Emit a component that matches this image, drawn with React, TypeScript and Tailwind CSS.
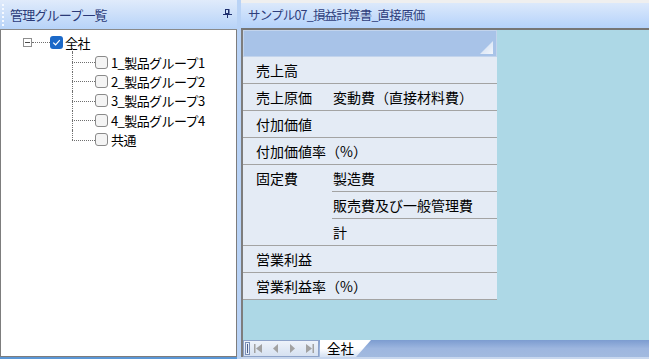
import React from "react";

const jp = "font-['Noto_Sans_CJK_JP',sans-serif]";

function Check({ checked }: { checked?: boolean }) {
  if (checked) {
    return (
      <span className="flex h-[13px] w-[13px] shrink-0 items-center justify-center rounded-[3px] bg-[#1c69c8]">
        <svg width="9" height="7" viewBox="0 0 9 7">
          <path d="M1.2 3.6 L3.6 5.8 L7.8 1.2" fill="none" stroke="#ffffff" strokeWidth="1.2" />
        </svg>
      </span>
    );
  }
  return <span className="h-[13px] w-[13px] shrink-0 rounded-[3px] border border-[#8a8a8a] bg-[#f4f4f4]" />;
}

const groups = ["1_製品グループ1", "2_製品グループ2", "3_製品グループ3", "4_製品グループ4", "共通"];

function Tree() {
  return (
    <div className="pt-[3px] text-[13px] tracking-[-0.6px] text-black">
      {/* root */}
      <div className="relative flex h-[19.4px] items-center">
        <span className="ml-[22px] flex h-[9px] w-[9px] items-center justify-center border border-[#8e8e8e] bg-white">
          <span className="h-px w-[5px] bg-[#4a4a4a]" />
        </span>
        <span className="h-0 w-[18px] border-t border-dotted border-[#6f6f6f]" />
        <Check checked />
        <span className="ml-[2px] leading-none">全社</span>
        <span className="absolute left-[71px] top-[15px] bottom-0 border-l border-dotted border-[#6f6f6f]" />
      </div>
      {groups.map((g, i) => (
        <div key={g} className="flex h-[19.4px] items-center">
          <span className="relative ml-[71px] h-full w-[23px]">
            <span
              className={
                i === groups.length - 1
                  ? "absolute left-0 top-0 h-1/2 border-l border-dotted border-[#6f6f6f]"
                  : "absolute left-0 top-0 h-full border-l border-dotted border-[#6f6f6f]"
              }
            />
            <span className="absolute left-0 right-0 top-1/2 border-t border-dotted border-[#6f6f6f]" />
          </span>
          <Check />
          <span className="ml-[3px] leading-none">{g}</span>
        </div>
      ))}
    </div>
  );
}

function PinIcon() {
  return (
    <svg width="9" height="9" viewBox="0 0 9 9" className="shrink-0">
      <rect x="2.5" y="0.5" width="3" height="4" fill="none" stroke="#1e2f6e" />
      <rect x="5" y="0" width="1.5" height="5" fill="#1e2f6e" />
      <rect x="0" y="5" width="9" height="1" fill="#1e2f6e" />
      <rect x="4" y="6" width="1" height="3" fill="#1e2f6e" />
    </svg>
  );
}

function LeftPanel() {
  return (
    <div className="flex h-full w-[237px] shrink-0 flex-col">
      <div className="flex h-[30px] items-center border-b border-[#8a8a8a] bg-gradient-to-b from-[#e0ebfb] to-[#b7d3f8]">
        <span className="ml-[2px] h-[22px] w-0 border-l-2 border-dotted border-[#f5f9ff]" />
        <span className="ml-[6px] text-[13px] leading-none tracking-[-0.8px] text-[#2b3a78]">管理グループ一覧</span>
        <span className="flex-1" />
        <span className="mr-[5px] mb-[3px]">
          <PinIcon />
        </span>
      </div>
      <div className="flex-1 border-x border-b border-[#7d7d7d] bg-white">
        <Tree />
      </div>
      <div className="h-[2px] bg-[#5b97d6]" />
    </div>
  );
}

type Row = { a: string; b?: string };
const topRows: Row[] = [
  { a: "売上高" },
  { a: "売上原価", b: "変動費（直接材料費）" },
  { a: "付加価値" },
  { a: "付加価値率（%）" },
];
const bottomRows: Row[] = [{ a: "営業利益" }, { a: "営業利益率（%）" }];

function GridRow({ a, b }: Row) {
  return (
    <div className="flex h-[27px] items-center border-b border-[#a3a3a3] bg-[#e4ebf5]">
      <span className="w-[89px] shrink-0 whitespace-nowrap pl-[13px]">{a}</span>
      {b && <span className="pl-[1px] whitespace-nowrap">{b}</span>}
    </div>
  );
}

function Grid() {
  return (
    <div className="w-[254px] text-[14px] leading-none text-black">
      <div className="relative h-[27px] border border-[#c3d4ec] bg-[#a8c3e8]">
        <svg width="13" height="13" viewBox="0 0 13 13" className="absolute right-[3px] bottom-[2px]">
          <defs>
            <linearGradient id="tri" x1="0" y1="0" x2="1" y2="1">
              <stop offset="0" stopColor="#c9d9f0" />
              <stop offset="1" stopColor="#f2f6fc" />
            </linearGradient>
          </defs>
          <polygon points="13,0 13,13 0,13" fill="url(#tri)" />
        </svg>
      </div>
      {topRows.map((r) => (
        <GridRow key={r.a} {...r} />
      ))}
      <div className="flex border-b border-[#a3a3a3] bg-[#e4ebf5]">
        <div className="flex h-[26px] w-[89px] shrink-0 items-center pl-[13px]">固定費</div>
        <div className="flex-1">
          {["製造費", "販売費及び一般管理費", "計"].map((s, i) => (
            <div
              key={s}
              className={
                i < 2
                  ? "flex h-[27px] items-center border-b border-[#a3a3a3] pl-[1px] whitespace-nowrap"
                  : "flex h-[26px] items-center pl-[1px] whitespace-nowrap"
              }
            >
              {s}
            </div>
          ))}
        </div>
      </div>
      {bottomRows.map((r) => (
        <GridRow key={r.a} {...r} />
      ))}
    </div>
  );
}

function TabBar() {
  return (
    <div className="flex h-[17px] bg-gradient-to-b from-[#7c9cd0] via-[#9db6df] to-[#a2badf]">
      <div className="flex w-[76px] items-center border border-[#8da2c8] bg-gradient-to-b from-[#eef3fa] to-[#d6e1f1]">
        <span className="ml-[1px] flex h-[13px] w-[5px] items-center justify-center border border-[#7a8fb8] bg-[#e9eff8]">
          <span className="h-[9px] w-px bg-[#4c5f8c]" />
        </span>
        <svg width="66" height="11" viewBox="0 0 66 11" className="ml-[1px]">
          <rect x="3" y="1" width="1.5" height="9" fill="#a2a2a2" />
          <polygon points="11,1 11,10 5,5.5" fill="#a2a2a2" />
          <polygon points="27,1 27,10 22,5.5" fill="#a2a2a2" />
          <polygon points="39,1 39,10 44,5.5" fill="#a2a2a2" />
          <polygon points="55,1 55,10 61,5.5" fill="#a2a2a2" />
          <rect x="61.5" y="1" width="1.5" height="9" fill="#a2a2a2" />
        </svg>
      </div>
      <div className="ml-[1px] flex w-[51px] items-center bg-gradient-to-b from-white via-white to-[#d3e0f3] pl-[7px] text-[13.5px] leading-none text-black [clip-path:polygon(0_0,100%_0,calc(100%-15px)_100%,0_100%)]">
        全社
      </div>
    </div>
  );
}

function RightPanel() {
  return (
    <div className="flex h-full min-w-0 flex-1 flex-col">
      <div className="flex h-[30px] items-center border-t-[3px] border-b-2 border-t-[#efefef] border-b-[#767676] bg-gradient-to-b from-[#dce9fb] to-[#b4d2fb] pl-[7px]">
        <span className="text-[12.5px] leading-none tracking-[-0.8px] text-[#2f3e7c]">サンプル07_損益計算書_直接原価</span>
      </div>
      <div className="flex flex-1 flex-col border-l-2 border-[#7d7d7d]">
        <div className="flex-1 bg-[#add8e6]">
          <Grid />
        </div>
        <TabBar />
      </div>
      <div className="h-[2px] bg-[#c8d7ee]" />
    </div>
  );
}

export default function App() {
  return (
    <div className={`flex h-[359px] w-[649px] overflow-hidden bg-[#b9d3f6] ${jp}`}>
      <LeftPanel />
      <div className="w-[4px] shrink-0 bg-[#b9d3f6]" />
      <RightPanel />
    </div>
  );
}
